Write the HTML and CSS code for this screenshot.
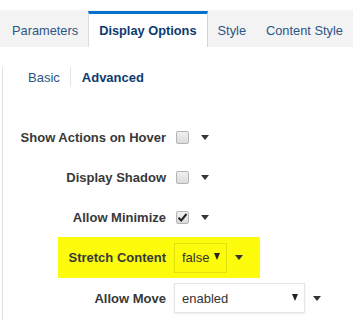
FILE: index.html
```html
<!DOCTYPE html>
<html lang="en">
<head>
    <meta charset="UTF-8">
    <title>Display Options</title>
    <link rel="stylesheet" href="styles.css">
</head>
<body>
    <div class="tabs">
        <div class="tab">Parameters</div>
        <div class="tab active">Display Options</div>
        <div class="tab">Style</div>
        <div class="tab">Content Style</div>
    </div>

    <div class="panel">
        <div class="subnav">
            <span class="sub">Basic</span>
            <span class="sep"></span>
            <span class="sub current">Advanced</span>
        </div>

        <div class="rows">
            <div class="row">
                <label class="name">Show Actions on Hover</label>
                <span class="check"></span>
                <span class="caret"></span>
            </div>
            <div class="row">
                <label class="name">Display Shadow</label>
                <span class="check"></span>
                <span class="caret"></span>
            </div>
            <div class="row">
                <label class="name">Allow Minimize</label>
                <span class="check">
                    <svg width="11" height="11" viewBox="0 0 11 11"><path d="M1.5 5.8 L4.2 8.5 L9.5 2" fill="none" stroke="#222" stroke-width="2"/></svg>
                </span>
                <span class="caret"></span>
            </div>
            <div class="row highlight">
                <label class="name">Stretch Content</label>
                <div class="select small"><span>false</span><span class="arrow"></span></div>
                <span class="caret"></span>
            </div>
            <div class="row">
                <label class="name">Allow Move</label>
                <div class="select wide"><span>enabled</span><span class="arrow"></span></div>
                <span class="caret"></span>
            </div>
        </div>
    </div>
</body>
</html>
```

FILE: styles.css
```css
* {
    box-sizing: border-box;
    margin: 0;
    padding: 0;
}

body {
    font-family: "Liberation Sans", Arial, sans-serif;
    font-size: 13px;
    color: #333;
    background: white;
    overflow: hidden;
}

.tabs {
    display: flex;
    margin-top: 10px;
    height: 37px;
    background: #f3f3f3;
    padding-left: 2px;
    white-space: nowrap;
    font-size: 12.8px;
}

.tab {
    display: flex;
    align-items: center;
    flex-shrink: 0;
    padding: 0 10px;
    border-top: 3px solid transparent;
    color: #2b5584;
}

.tab.active {
    background: white;
    border-top-color: #0572ce;
    border-left: 1px solid #dcdcdc;
    border-right: 1px solid #d4d4d4;
    margin-top: 1px;
    font-weight: bold;
    color: #0e3a70;
}

.panel {
    margin-left: 2px;
    border-left: 1px solid #e0e0e0;
    height: 270px;
}

.subnav {
    display: flex;
    align-items: center;
    height: 20px;
    margin-top: 20px;
    padding-left: 25px;
}

.sub {
    color: #2b5584;
}

.sub.current {
    font-weight: bold;
    color: #0e3a70;
}

.sep {
    width: 1px;
    height: 20px;
    background: #e4e4e4;
    margin: 0 11px 0 10px;
}

.rows {
    margin-top: 30px;
}

.row {
    display: flex;
    align-items: center;
    height: 40px;
}

.name {
    width: 163px;
    text-align: right;
    font-weight: bold;
    color: #383838;
    margin-right: 8px;
}

.check {
    width: 13px;
    height: 13px;
    margin-left: 2px;
    margin-right: 12px;
    border: 1px solid #b4b4b4;
    border-radius: 2px;
    background: linear-gradient(#f0f0f0, #dcdcdc);
    display: flex;
    align-items: center;
    justify-content: center;
}

.caret {
    width: 0;
    height: 0;
    border-left: 4px solid transparent;
    border-right: 4px solid transparent;
    border-top: 5px solid #333;
}

.highlight {
    margin-left: 55px;
    width: 202px;
    height: 41px;
    background: #fcfc0c;
}

.highlight .name {
    width: 108px;
}

.select {
    display: flex;
    align-items: center;
    justify-content: space-between;
    height: 30px;
    padding: 0 6px 0 7px;
    border: 1px solid rgba(0, 0, 0, 0.1);
    margin-right: 8px;
    color: #333;
}

.select.small {
    width: 53px;
    justify-content: flex-start;
    gap: 5px;
}

.select.wide {
    width: 131px;
    background: white;
    box-shadow: 0 1px 2px rgba(0, 0, 0, 0.08);
}

.arrow {
    width: 0;
    height: 0;
    border-left: 3px solid transparent;
    border-right: 3px solid transparent;
    border-top: 7px solid #222;
    margin-top: -2px;
}
```
